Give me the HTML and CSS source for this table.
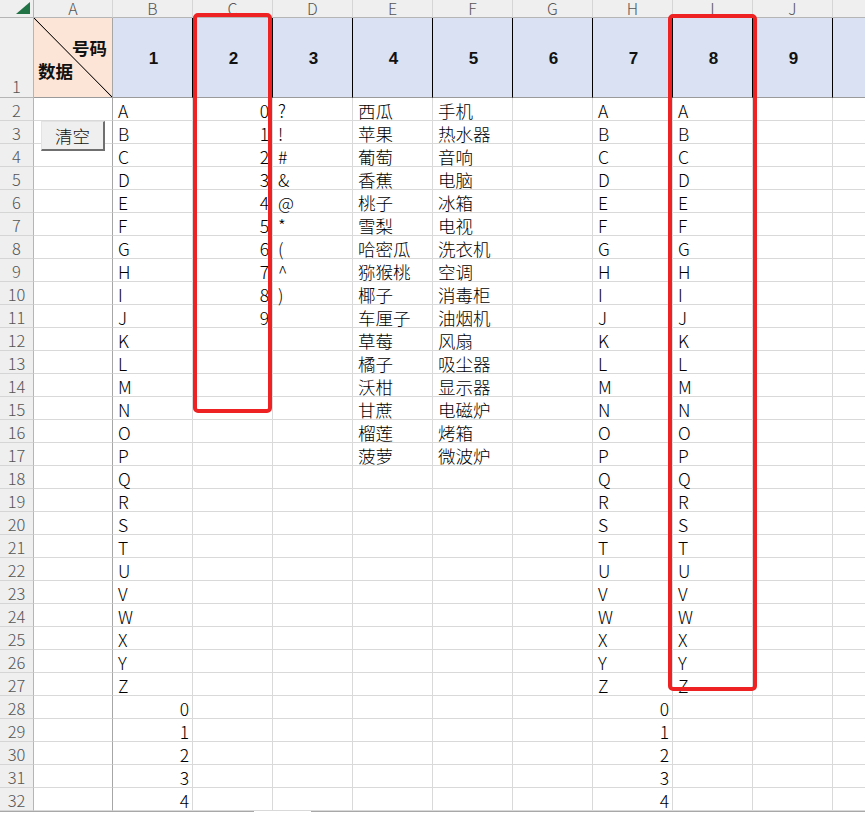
FILE: index.html
```html
<!DOCTYPE html>
<html lang="zh-CN">
<head>
<meta charset="utf-8">
<title>Sheet</title>
<link rel="stylesheet" href="styles.css">
</head>
<body>
<div class="sheet">
  <div class="ch corner"><svg width="34" height="18" viewBox="0 0 34 18"><polygon points="16,14 30,2 30,14" fill="#217346"/></svg></div>
  <div class="ch">A</div><div class="ch">B</div><div class="ch">C</div><div class="ch">D</div><div class="ch">E</div><div class="ch">F</div><div class="ch">G</div><div class="ch">H</div><div class="ch">I</div><div class="ch">J</div><div class="ch">K</div>

  <div class="rh rh1">1</div>
  <div class="hd diag"><span class="tr">号码</span><span class="bl">数据</span></div>
  <div class="hd">1</div><div class="hd">2</div><div class="hd">3</div><div class="hd">4</div><div class="hd">5</div><div class="hd">6</div><div class="hd">7</div><div class="hd">8</div><div class="hd">9</div><div class="hd"></div>

  <div class="rh">2</div><div class="a"></div><div>A</div><div class="n">0</div><div>?</div><div>西瓜</div><div>手机</div><div></div><div>A</div><div>A</div><div></div><div></div>
  <div class="rh">3</div><div class="a"></div><div>B</div><div class="n">1</div><div>!</div><div>苹果</div><div>热水器</div><div></div><div>B</div><div>B</div><div></div><div></div>
  <div class="rh">4</div><div class="a"></div><div>C</div><div class="n">2</div><div>#</div><div>葡萄</div><div>音响</div><div></div><div>C</div><div>C</div><div></div><div></div>
  <div class="rh">5</div><div class="a"></div><div>D</div><div class="n">3</div><div>&amp;</div><div>香蕉</div><div>电脑</div><div></div><div>D</div><div>D</div><div></div><div></div>
  <div class="rh">6</div><div class="a"></div><div>E</div><div class="n">4</div><div>@</div><div>桃子</div><div>冰箱</div><div></div><div>E</div><div>E</div><div></div><div></div>
  <div class="rh">7</div><div class="a"></div><div>F</div><div class="n">5</div><div>*</div><div>雪梨</div><div>电视</div><div></div><div>F</div><div>F</div><div></div><div></div>
  <div class="rh">8</div><div class="a"></div><div>G</div><div class="n">6</div><div>(</div><div>哈密瓜</div><div>洗衣机</div><div></div><div>G</div><div>G</div><div></div><div></div>
  <div class="rh">9</div><div class="a"></div><div>H</div><div class="n">7</div><div>^</div><div>猕猴桃</div><div>空调</div><div></div><div>H</div><div>H</div><div></div><div></div>
  <div class="rh">10</div><div class="a"></div><div>I</div><div class="n">8</div><div>)</div><div>椰子</div><div>消毒柜</div><div></div><div>I</div><div>I</div><div></div><div></div>
  <div class="rh">11</div><div class="a"></div><div>J</div><div class="n">9</div><div></div><div>车厘子</div><div>油烟机</div><div></div><div>J</div><div>J</div><div></div><div></div>
  <div class="rh">12</div><div class="a"></div><div>K</div><div></div><div></div><div>草莓</div><div>风扇</div><div></div><div>K</div><div>K</div><div></div><div></div>
  <div class="rh">13</div><div class="a"></div><div>L</div><div></div><div></div><div>橘子</div><div>吸尘器</div><div></div><div>L</div><div>L</div><div></div><div></div>
  <div class="rh">14</div><div class="a"></div><div>M</div><div></div><div></div><div>沃柑</div><div>显示器</div><div></div><div>M</div><div>M</div><div></div><div></div>
  <div class="rh">15</div><div class="a"></div><div>N</div><div></div><div></div><div>甘蔗</div><div>电磁炉</div><div></div><div>N</div><div>N</div><div></div><div></div>
  <div class="rh">16</div><div class="a"></div><div>O</div><div></div><div></div><div>榴莲</div><div>烤箱</div><div></div><div>O</div><div>O</div><div></div><div></div>
  <div class="rh">17</div><div class="a"></div><div>P</div><div></div><div></div><div>菠萝</div><div>微波炉</div><div></div><div>P</div><div>P</div><div></div><div></div>
  <div class="rh">18</div><div class="a"></div><div>Q</div><div></div><div></div><div></div><div></div><div></div><div>Q</div><div>Q</div><div></div><div></div>
  <div class="rh">19</div><div class="a"></div><div>R</div><div></div><div></div><div></div><div></div><div></div><div>R</div><div>R</div><div></div><div></div>
  <div class="rh">20</div><div class="a"></div><div>S</div><div></div><div></div><div></div><div></div><div></div><div>S</div><div>S</div><div></div><div></div>
  <div class="rh">21</div><div class="a"></div><div>T</div><div></div><div></div><div></div><div></div><div></div><div>T</div><div>T</div><div></div><div></div>
  <div class="rh">22</div><div class="a"></div><div>U</div><div></div><div></div><div></div><div></div><div></div><div>U</div><div>U</div><div></div><div></div>
  <div class="rh">23</div><div class="a"></div><div>V</div><div></div><div></div><div></div><div></div><div></div><div>V</div><div>V</div><div></div><div></div>
  <div class="rh">24</div><div class="a"></div><div>W</div><div></div><div></div><div></div><div></div><div></div><div>W</div><div>W</div><div></div><div></div>
  <div class="rh">25</div><div class="a"></div><div>X</div><div></div><div></div><div></div><div></div><div></div><div>X</div><div>X</div><div></div><div></div>
  <div class="rh">26</div><div class="a"></div><div>Y</div><div></div><div></div><div></div><div></div><div></div><div>Y</div><div>Y</div><div></div><div></div>
  <div class="rh">27</div><div class="a"></div><div>Z</div><div></div><div></div><div></div><div></div><div></div><div>Z</div><div>Z</div><div></div><div></div>
  <div class="rh">28</div><div class="a"></div><div class="n">0</div><div></div><div></div><div></div><div></div><div></div><div class="n">0</div><div></div><div></div><div></div>
  <div class="rh">29</div><div class="a"></div><div class="n">1</div><div></div><div></div><div></div><div></div><div></div><div class="n">1</div><div></div><div></div><div></div>
  <div class="rh">30</div><div class="a"></div><div class="n">2</div><div></div><div></div><div></div><div></div><div></div><div class="n">2</div><div></div><div></div><div></div>
  <div class="rh">31</div><div class="a"></div><div class="n">3</div><div></div><div></div><div></div><div></div><div></div><div class="n">3</div><div></div><div></div><div></div>
  <div class="rh">32</div><div class="a"></div><div class="n">4</div><div></div><div></div><div></div><div></div><div></div><div class="n">4</div><div></div><div></div><div></div>

  <button class="clear-btn" type="button">清空</button>
  <span class="mark mark-c"></span>
  <span class="mark mark-i"></span>
</div>
<div class="hscroll"><span class="seg seg1"></span><span class="seg seg2"></span></div>
</body>
</html>
```

FILE: styles.css
```css
html, body {
  margin: 0;
  padding: 0;
}
body {
  width: 865px;
  height: 813px;
  overflow: hidden;
  background: #fff;
  font-family: "Noto Sans CJK SC", "Noto Sans", sans-serif;
}
.sheet {
  position: relative;
  display: grid;
  grid-template-columns: 34px 79px repeat(10, 80px);
  grid-template-rows: 18px 80px;
  grid-auto-rows: 23px;
  width: 865px;
  overflow: hidden;
}
.sheet > div {
  box-sizing: border-box;
  border-right: 1px solid #d9d9d9;
  border-bottom: 1px solid #d9d9d9;
  font-size: 17.5px;
  font-weight: 300;
  line-height: 19px;
  padding: 3px 3px 0 5px;
  white-space: nowrap;
  color: #000;
}
.sheet > div.a {
  border-right-color: #a6a6a6;
}
.sheet > div.n {
  text-align: right;
}
.sheet > .ch {
  background: #efefef;
  color: #555;
  text-align: center;
  font-size: 16px;
  line-height: 17px;
  padding: 0;
  border-right-color: #d5d5d5;
  border-bottom-color: #b5b5b5;
}
.sheet > .ch.corner {
  border-right-color: #b5b5b5;
}
.corner svg {
  display: block;
}
.sheet > .rh {
  background: #efefef;
  color: #555;
  text-align: center;
  font-size: 16.5px;
  padding: 3px 0 0;
  border-right-color: #b5b5b5;
  border-bottom-color: #d5d5d5;
}
.sheet > .rh.rh1 {
  display: flex;
  align-items: flex-end;
  justify-content: center;
  line-height: 22px;
  border-bottom-color: #b5b5b5;
}
.sheet > .hd {
  background: #d9e1f2;
  border-right: 1px solid #000;
  border-bottom: 1px solid #9a9a9a;
  display: flex;
  align-items: center;
  justify-content: center;
  font-family: "Liberation Sans", Arial, sans-serif;
  font-weight: 700;
  font-size: 17px;
  line-height: 20px;
  color: #111;
  padding: 3px 0 0 2px;
}
.sheet > .hd.diag {
  background-color: #fce4d6;
  background-image: linear-gradient(to top right, transparent calc(50% - 0.8px), #000 50%, transparent calc(50% + 0.8px));
  border-right-color: #a6a6a6;
  display: flex;
  flex-direction: column;
  align-items: stretch;
  justify-content: flex-start;
  padding: 18px 5px 0 4px;
  font-family: "Noto Sans CJK SC", sans-serif;
  font-size: 17.5px;
  font-weight: 700;
  line-height: 23px;
}
.diag .tr {
  text-align: right;
}
.diag .bl {
  text-align: left;
}
.clear-btn {
  position: absolute;
  left: 41px;
  top: 121px;
  width: 64px;
  height: 30px;
  box-sizing: border-box;
  background: #efefef;
  border: 1px solid #e3e3e3;
  border-right: 2px solid #6f6f6f;
  border-bottom: 2px solid #6f6f6f;
  border-radius: 0;
  padding: 0;
  font-family: "Noto Sans CJK SC", sans-serif;
  font-size: 17.5px;
  font-weight: 300;
  color: #111;
  line-height: 26px;
}
.mark {
  position: absolute;
  box-sizing: border-box;
  border: 4px solid #ee2222;
  border-radius: 5px;
}
.mark-c {
  left: 193px;
  top: 13px;
  width: 79px;
  height: 400px;
}
.mark-i {
  left: 668px;
  top: 14px;
  width: 89px;
  height: 677px;
}
.hscroll {
  display: flex;
  height: 2px;
}
.seg {
  display: block;
  height: 1px;
  background: #a8a8a8;
}
.seg1 {
  width: 254px;
  margin-right: 57px;
}
.seg2 {
  flex: 1;
}
```
